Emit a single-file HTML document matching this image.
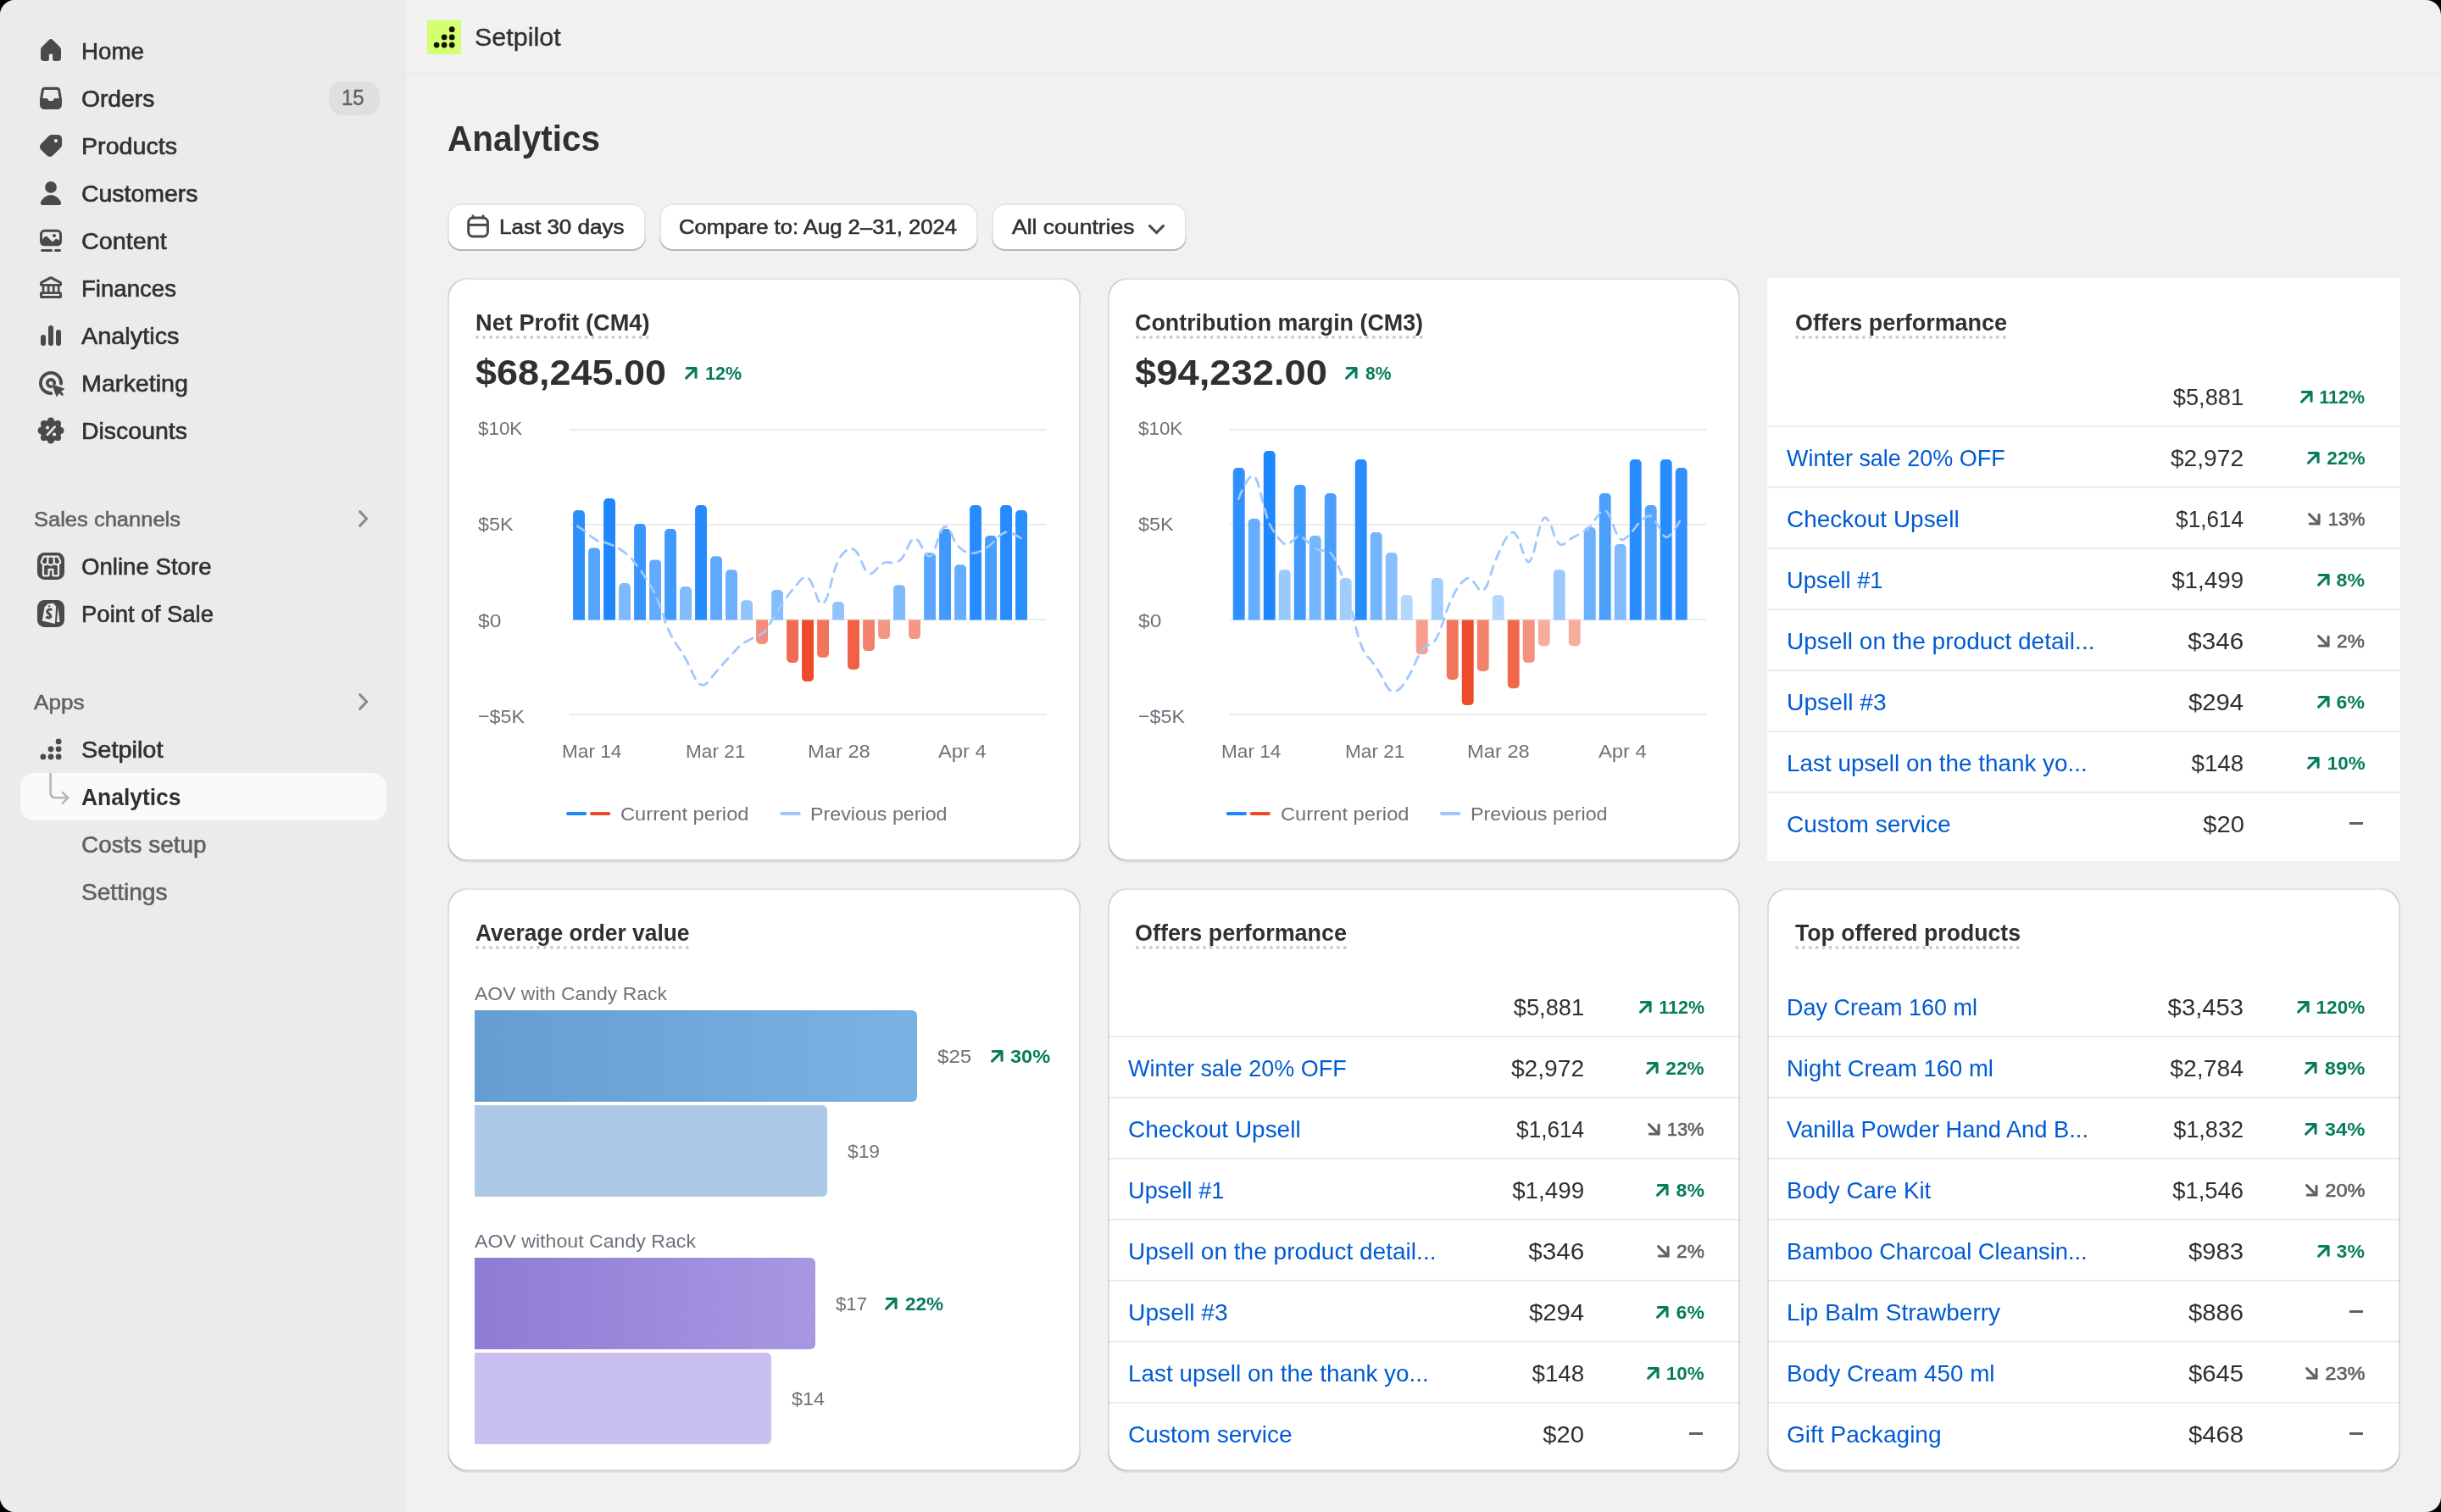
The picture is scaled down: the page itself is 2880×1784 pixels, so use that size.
<!DOCTYPE html>
<html><head><meta charset="utf-8"><title>Setpilot Analytics</title>
<style>
html,body{margin:0;padding:0;background:#000;}
body{width:2880px;height:1784px;overflow:hidden;font-family:"Liberation Sans",sans-serif;}
#app{position:absolute;left:0;top:0;width:2880px;height:1784px;background:#f1f1f1;border-radius:18px;overflow:hidden;will-change:transform;}
#side{position:absolute;left:0;top:0;width:480px;height:1784px;background:#ebebeb;}
#topline{position:absolute;left:480px;top:86px;width:2400px;height:2px;background:#ebebeb;}
.t{position:absolute;white-space:nowrap;line-height:1;}
.abs{position:absolute;}
.card{position:absolute;background:#fff;border-radius:24px;box-shadow:0 2px 0 0 rgba(26,26,26,.07);}
.bev{position:absolute;border-radius:24px;box-shadow:inset 2px 0 0 0 rgba(0,0,0,.13),inset -2px 0 0 0 rgba(0,0,0,.13),inset 0 -2px 0 0 rgba(0,0,0,.17),inset 0 2px 0 0 rgba(204,204,204,.5);}
.btn{position:absolute;background:#fff;border-radius:16px;height:56px;top:240px;box-shadow:inset 0 -2px 0 0 #b5b5b5,inset 0 0 0 2px rgba(0,0,0,.1),inset 0 1px 0 3px #fff;}
.dot{position:absolute;height:0;border-bottom:4px dotted #cccccc;}
.hr{position:absolute;height:2px;background:#ebebeb;}
svg{position:absolute;overflow:visible;}
</style></head><body><div id="app">
<div id="side"></div><div id="topline"></div>
<span class="t" id="t0" style="font-size:26.75px;top:48.00px;color:#303030;-webkit-text-stroke:0.6px #303030;left:96.00px;transform:scaleX(1.0370);transform-origin:0 0;">Home</span>
<span class="t" id="t1" style="font-size:26.75px;top:104.00px;color:#303030;-webkit-text-stroke:0.6px #303030;left:96.00px;transform:scaleX(1.0555);transform-origin:0 0;">Orders</span>
<span class="t" id="t2" style="font-size:26.75px;top:160.00px;color:#303030;-webkit-text-stroke:0.6px #303030;left:96.00px;transform:scaleX(1.0703);transform-origin:0 0;">Products</span>
<span class="t" id="t3" style="font-size:26.75px;top:216.00px;color:#303030;-webkit-text-stroke:0.6px #303030;left:96.00px;transform:scaleX(1.0632);transform-origin:0 0;">Customers</span>
<span class="t" id="t4" style="font-size:26.75px;top:272.00px;color:#303030;-webkit-text-stroke:0.6px #303030;left:96.00px;transform:scaleX(1.0747);transform-origin:0 0;">Content</span>
<span class="t" id="t5" style="font-size:26.75px;top:328.00px;color:#303030;-webkit-text-stroke:0.6px #303030;left:96.00px;transform:scaleX(1.0318);transform-origin:0 0;">Finances</span>
<span class="t" id="t6" style="font-size:26.75px;top:384.00px;color:#303030;-webkit-text-stroke:0.6px #303030;left:96.00px;transform:scaleX(1.0790);transform-origin:0 0;">Analytics</span>
<span class="t" id="t7" style="font-size:26.75px;top:440.00px;color:#303030;-webkit-text-stroke:0.6px #303030;left:96.00px;transform:scaleX(1.0719);transform-origin:0 0;">Marketing</span>
<span class="t" id="t8" style="font-size:26.75px;top:496.00px;color:#303030;-webkit-text-stroke:0.6px #303030;left:96.00px;transform:scaleX(1.0634);transform-origin:0 0;">Discounts</span>
<div class="abs" style="left:388px;top:96px;width:60px;height:40px;border-radius:16px;background:#dfdfdf"></div>
<span class="t" id="t9" style="font-size:25.25px;top:103.00px;color:#616161;-webkit-text-stroke:0.4px #616161;left:403.20px;transform:scaleX(0.9468);transform-origin:0 0;">15</span>
<span class="t" id="t10" style="font-size:24.75px;top:601.00px;color:#616161;-webkit-text-stroke:0.55px #616161;left:40.00px;transform:scaleX(1.0305);transform-origin:0 0;">Sales channels</span>
<span class="t" id="t11" style="font-size:26.75px;top:656.00px;color:#303030;-webkit-text-stroke:0.6px #303030;left:96.00px;transform:scaleX(1.0323);transform-origin:0 0;">Online Store</span>
<span class="t" id="t12" style="font-size:26.75px;top:712.00px;color:#303030;-webkit-text-stroke:0.6px #303030;left:96.00px;transform:scaleX(1.0284);transform-origin:0 0;">Point of Sale</span>
<span class="t" id="t13" style="font-size:24.75px;top:817.00px;color:#616161;-webkit-text-stroke:0.55px #616161;left:40.00px;transform:scaleX(1.0546);transform-origin:0 0;">Apps</span>
<span class="t" id="t14" style="font-size:26.75px;top:872.00px;color:#303030;-webkit-text-stroke:0.6px #303030;left:96.00px;transform:scaleX(1.0814);transform-origin:0 0;">Setpilot</span>
<div class="abs" style="left:24px;top:912px;width:432px;height:56px;border-radius:16px;background:#fafafa"></div>
<span class="t" id="t15" style="font-size:26.75px;top:928.00px;color:#303030;font-weight:700;left:96.00px;transform:scaleX(0.9878);transform-origin:0 0;">Analytics</span>
<span class="t" id="t16" style="font-size:26.75px;top:984.00px;color:#616161;-webkit-text-stroke:0.55px #616161;left:96.00px;transform:scaleX(1.0442);transform-origin:0 0;">Costs setup</span>
<span class="t" id="t17" style="font-size:26.75px;top:1040.00px;color:#616161;-webkit-text-stroke:0.55px #616161;left:96.00px;transform:scaleX(1.0501);transform-origin:0 0;">Settings</span>
<div class="abs" style="left:504px;top:24px;width:40px;height:40px;background:#d4ff70"></div>
<span class="t" id="t18" style="font-size:30.25px;top:29.00px;color:#303030;-webkit-text-stroke:0.35px #303030;left:560.00px;transform:scaleX(1.0089);transform-origin:0 0;">Setpilot</span>
<span class="t" id="t19" style="font-size:42.00px;top:143.00px;color:#303030;font-weight:700;left:528.00px;transform:scaleX(0.9639);transform-origin:0 0;">Analytics</span>
<div class="btn" style="left:528px;width:234px"></div>
<div class="btn" style="left:778px;width:376px"></div>
<div class="btn" style="left:1170px;width:230px"></div>
<span class="t" id="t20" style="font-size:24.75px;top:256.00px;color:#303030;-webkit-text-stroke:0.6px #303030;left:588.50px;transform:scaleX(1.0510);transform-origin:0 0;">Last 30 days</span>
<span class="t" id="t21" style="font-size:24.75px;top:256.00px;color:#303030;-webkit-text-stroke:0.6px #303030;left:801.00px;transform:scaleX(1.0364);transform-origin:0 0;">Compare to: Aug 2–31, 2024</span>
<span class="t" id="t22" style="font-size:24.75px;top:256.00px;color:#303030;-webkit-text-stroke:0.6px #303030;left:1194.00px;transform:scaleX(1.0719);transform-origin:0 0;">All countries</span>
<div class="card" style="left:528.00px;top:328px;width:746.67px;height:688px"></div>
<div class="card" style="left:1306.67px;top:328px;width:746.67px;height:688px"></div>
<div class="abs" style="left:2085.34px;top:328px;width:746.67px;height:688px;background:#fff"></div>
<div class="card" style="left:528.00px;top:1048px;width:746.67px;height:688px"></div>
<div class="card" style="left:1306.67px;top:1048px;width:746.67px;height:688px"></div>
<div class="card" style="left:2085.34px;top:1048px;width:746.67px;height:688px"></div>
<span class="t" id="t23" style="font-size:26.75px;top:368.00px;color:#303030;font-weight:700;left:560.50px;transform:scaleX(1.0168);transform-origin:0 0;">Net Profit (CM4)</span>
<div class="dot" style="left:561.00px;top:396px;width:204.5px"></div>
<span class="t" id="t24" style="font-size:26.75px;top:368.00px;color:#303030;font-weight:700;left:1339.17px;transform:scaleX(1.0036);transform-origin:0 0;">Contribution margin (CM3)</span>
<div class="dot" style="left:1339.67px;top:396px;width:339.0px"></div>
<span class="t" id="t25" style="font-size:26.75px;top:368.00px;color:#303030;font-weight:700;left:2117.84px;transform:scaleX(1.0070);transform-origin:0 0;">Offers performance</span>
<div class="dot" style="left:2118.34px;top:396px;width:249.0px"></div>
<span class="t" id="t26" style="font-size:26.75px;top:1088.00px;color:#303030;font-weight:700;left:560.50px;transform:scaleX(0.9854);transform-origin:0 0;">Average order value</span>
<div class="dot" style="left:561.00px;top:1116px;width:251.5px"></div>
<span class="t" id="t27" style="font-size:26.75px;top:1088.00px;color:#303030;font-weight:700;left:1339.17px;transform:scaleX(1.0070);transform-origin:0 0;">Offers performance</span>
<div class="dot" style="left:1339.67px;top:1116px;width:249.0px"></div>
<span class="t" id="t28" style="font-size:26.75px;top:1088.00px;color:#303030;font-weight:700;left:2117.84px;transform:scaleX(0.9963);transform-origin:0 0;">Top offered products</span>
<div class="dot" style="left:2118.34px;top:1116px;width:265.0px"></div>
<span class="t" id="t29" style="font-size:42.25px;top:419.00px;color:#303030;font-weight:700;left:560.50px;transform:scaleX(1.0640);transform-origin:0 0;">$68,245.00</span>
<span class="t" id="t30" style="font-size:22.75px;top:429.00px;color:#077c5d;font-weight:700;left:832.00px;transform:scaleX(0.9441);transform-origin:0 0;">12%</span>
<svg style="left:808.30px;top:432.60px" width="14.6" height="14.6" viewBox="0 0 14.6 14.6"><path d="M2.3 1.55H13.05V12.3M13.05 1.55L1.55 13.05" fill="none" stroke="#077c5d" stroke-width="3.1" stroke-linecap="round" stroke-linejoin="round"/></svg>
<span class="t" id="t31" style="font-size:42.25px;top:419.00px;color:#303030;font-weight:700;left:1339.17px;transform:scaleX(1.0734);transform-origin:0 0;">$94,232.00</span>
<span class="t" id="t32" style="font-size:22.75px;top:429.00px;color:#077c5d;font-weight:700;left:1611.00px;transform:scaleX(0.9273);transform-origin:0 0;">8%</span>
<svg style="left:1587.00px;top:432.60px" width="14.6" height="14.6" viewBox="0 0 14.6 14.6"><path d="M2.3 1.55H13.05V12.3M13.05 1.55L1.55 13.05" fill="none" stroke="#077c5d" stroke-width="3.1" stroke-linecap="round" stroke-linejoin="round"/></svg>
<span class="t" id="t33" style="font-size:27.50px;top:455.00px;color:#303030;right:232.46px;transform:scaleX(0.9902);transform-origin:100% 0;">$5,881</span>
<span class="t" id="t34" style="font-size:22.75px;top:457.00px;color:#077c5d;font-weight:700;right:89.76px;transform:scaleX(0.9414);transform-origin:100% 0;">112%</span>
<svg style="left:2713.54px;top:460.60px" width="14.6" height="14.6" viewBox="0 0 14.6 14.6"><path d="M2.3 1.55H13.05V12.3M13.05 1.55L1.55 13.05" fill="none" stroke="#077c5d" stroke-width="3.1" stroke-linecap="round" stroke-linejoin="round"/></svg>
<div class="hr" style="left:2085.34px;top:502px;width:746.67px"></div>
<span class="t" id="t35" style="font-size:26.75px;top:528.00px;color:#005bd3;left:2108.14px;transform:scaleX(1.0079);transform-origin:0 0;">Winter sale 20% OFF</span>
<span class="t" id="t36" style="font-size:27.50px;top:527.00px;color:#303030;right:232.46px;transform:scaleX(1.0247);transform-origin:100% 0;">$2,972</span>
<span class="t" id="t37" style="font-size:22.75px;top:529.00px;color:#077c5d;font-weight:700;right:89.76px;transform:scaleX(0.9924);transform-origin:100% 0;">22%</span>
<svg style="left:2721.94px;top:532.60px" width="14.6" height="14.6" viewBox="0 0 14.6 14.6"><path d="M2.3 1.55H13.05V12.3M13.05 1.55L1.55 13.05" fill="none" stroke="#077c5d" stroke-width="3.1" stroke-linecap="round" stroke-linejoin="round"/></svg>
<div class="hr" style="left:2085.34px;top:574px;width:746.67px"></div>
<span class="t" id="t38" style="font-size:26.75px;top:600.00px;color:#005bd3;left:2108.14px;transform:scaleX(1.0453);transform-origin:0 0;">Checkout Upsell</span>
<span class="t" id="t39" style="font-size:27.50px;top:599.00px;color:#303030;right:232.46px;transform:scaleX(0.9510);transform-origin:100% 0;">$1,614</span>
<span class="t" id="t40" style="font-size:22.75px;top:601.00px;color:#616161;-webkit-text-stroke:0.6px #616161;right:89.76px;transform:scaleX(0.9595);transform-origin:100% 0;">13%</span>
<svg style="left:2723.44px;top:604.60px" width="14.6" height="14.6" viewBox="0 0 14.6 14.6"><path d="M13.05 2.3V13.05H2.3M13.05 13.05L1.55 1.55" fill="none" stroke="#616161" stroke-width="3.1" stroke-linecap="round" stroke-linejoin="round"/></svg>
<div class="hr" style="left:2085.34px;top:646px;width:746.67px"></div>
<span class="t" id="t41" style="font-size:26.75px;top:672.00px;color:#005bd3;left:2108.14px;transform:scaleX(1.0177);transform-origin:0 0;">Upsell #1</span>
<span class="t" id="t42" style="font-size:27.50px;top:671.00px;color:#303030;right:232.46px;transform:scaleX(1.0104);transform-origin:100% 0;">$1,499</span>
<span class="t" id="t43" style="font-size:22.75px;top:673.00px;color:#077c5d;font-weight:700;right:89.76px;transform:scaleX(1.0124);transform-origin:100% 0;">8%</span>
<svg style="left:2733.84px;top:676.60px" width="14.6" height="14.6" viewBox="0 0 14.6 14.6"><path d="M2.3 1.55H13.05V12.3M13.05 1.55L1.55 13.05" fill="none" stroke="#077c5d" stroke-width="3.1" stroke-linecap="round" stroke-linejoin="round"/></svg>
<div class="hr" style="left:2085.34px;top:718px;width:746.67px"></div>
<span class="t" id="t44" style="font-size:26.75px;top:744.00px;color:#005bd3;left:2108.14px;transform:scaleX(1.0491);transform-origin:0 0;">Upsell on the product detail...</span>
<span class="t" id="t45" style="font-size:27.50px;top:743.00px;color:#303030;right:232.46px;transform:scaleX(1.0787);transform-origin:100% 0;">$346</span>
<span class="t" id="t46" style="font-size:22.75px;top:745.00px;color:#616161;-webkit-text-stroke:0.6px #616161;right:89.76px;transform:scaleX(0.9972);transform-origin:100% 0;">2%</span>
<svg style="left:2734.34px;top:748.60px" width="14.6" height="14.6" viewBox="0 0 14.6 14.6"><path d="M13.05 2.3V13.05H2.3M13.05 13.05L1.55 1.55" fill="none" stroke="#616161" stroke-width="3.1" stroke-linecap="round" stroke-linejoin="round"/></svg>
<div class="hr" style="left:2085.34px;top:790px;width:746.67px"></div>
<span class="t" id="t47" style="font-size:26.75px;top:816.00px;color:#005bd3;left:2108.14px;transform:scaleX(1.0553);transform-origin:0 0;">Upsell #3</span>
<span class="t" id="t48" style="font-size:27.50px;top:815.00px;color:#303030;right:232.46px;transform:scaleX(1.0672);transform-origin:100% 0;">$294</span>
<span class="t" id="t49" style="font-size:22.75px;top:817.00px;color:#077c5d;font-weight:700;right:89.76px;transform:scaleX(1.0124);transform-origin:100% 0;">6%</span>
<svg style="left:2733.84px;top:820.60px" width="14.6" height="14.6" viewBox="0 0 14.6 14.6"><path d="M2.3 1.55H13.05V12.3M13.05 1.55L1.55 13.05" fill="none" stroke="#077c5d" stroke-width="3.1" stroke-linecap="round" stroke-linejoin="round"/></svg>
<div class="hr" style="left:2085.34px;top:862px;width:746.67px"></div>
<span class="t" id="t50" style="font-size:26.75px;top:888.00px;color:#005bd3;left:2108.14px;transform:scaleX(1.0416);transform-origin:0 0;">Last upsell on the thank yo...</span>
<span class="t" id="t51" style="font-size:27.50px;top:887.00px;color:#303030;right:232.46px;transform:scaleX(1.0084);transform-origin:100% 0;">$148</span>
<span class="t" id="t52" style="font-size:22.75px;top:889.00px;color:#077c5d;font-weight:700;right:89.76px;transform:scaleX(0.9836);transform-origin:100% 0;">10%</span>
<svg style="left:2722.34px;top:892.60px" width="14.6" height="14.6" viewBox="0 0 14.6 14.6"><path d="M2.3 1.55H13.05V12.3M13.05 1.55L1.55 13.05" fill="none" stroke="#077c5d" stroke-width="3.1" stroke-linecap="round" stroke-linejoin="round"/></svg>
<div class="hr" style="left:2085.34px;top:934px;width:746.67px"></div>
<span class="t" id="t53" style="font-size:26.75px;top:960.00px;color:#005bd3;left:2108.14px;transform:scaleX(1.0508);transform-origin:0 0;">Custom service</span>
<span class="t" id="t54" style="font-size:27.50px;top:959.00px;color:#303030;right:232.46px;transform:scaleX(1.0612);transform-origin:100% 0;">$20</span>
<div class="abs" style="left:2771.94px;top:970.30px;width:16.3px;height:3px;background:#616161"></div>
<span class="t" id="t55" style="font-size:27.50px;top:1175.00px;color:#303030;right:1011.13px;transform:scaleX(0.9902);transform-origin:100% 0;">$5,881</span>
<span class="t" id="t56" style="font-size:22.75px;top:1177.00px;color:#077c5d;font-weight:700;right:869.23px;transform:scaleX(0.9414);transform-origin:100% 0;">112%</span>
<svg style="left:1934.07px;top:1180.60px" width="14.6" height="14.6" viewBox="0 0 14.6 14.6"><path d="M2.3 1.55H13.05V12.3M13.05 1.55L1.55 13.05" fill="none" stroke="#077c5d" stroke-width="3.1" stroke-linecap="round" stroke-linejoin="round"/></svg>
<div class="hr" style="left:1306.67px;top:1222px;width:746.67px"></div>
<span class="t" id="t57" style="font-size:26.75px;top:1248.00px;color:#005bd3;left:1331.47px;transform:scaleX(1.0079);transform-origin:0 0;">Winter sale 20% OFF</span>
<span class="t" id="t58" style="font-size:27.50px;top:1247.00px;color:#303030;right:1011.13px;transform:scaleX(1.0247);transform-origin:100% 0;">$2,972</span>
<span class="t" id="t59" style="font-size:22.75px;top:1249.00px;color:#077c5d;font-weight:700;right:869.23px;transform:scaleX(0.9924);transform-origin:100% 0;">22%</span>
<svg style="left:1942.47px;top:1252.60px" width="14.6" height="14.6" viewBox="0 0 14.6 14.6"><path d="M2.3 1.55H13.05V12.3M13.05 1.55L1.55 13.05" fill="none" stroke="#077c5d" stroke-width="3.1" stroke-linecap="round" stroke-linejoin="round"/></svg>
<div class="hr" style="left:1306.67px;top:1294px;width:746.67px"></div>
<span class="t" id="t60" style="font-size:26.75px;top:1320.00px;color:#005bd3;left:1331.47px;transform:scaleX(1.0453);transform-origin:0 0;">Checkout Upsell</span>
<span class="t" id="t61" style="font-size:27.50px;top:1319.00px;color:#303030;right:1011.13px;transform:scaleX(0.9510);transform-origin:100% 0;">$1,614</span>
<span class="t" id="t62" style="font-size:22.75px;top:1321.00px;color:#616161;-webkit-text-stroke:0.6px #616161;right:869.23px;transform:scaleX(0.9595);transform-origin:100% 0;">13%</span>
<svg style="left:1943.97px;top:1324.60px" width="14.6" height="14.6" viewBox="0 0 14.6 14.6"><path d="M13.05 2.3V13.05H2.3M13.05 13.05L1.55 1.55" fill="none" stroke="#616161" stroke-width="3.1" stroke-linecap="round" stroke-linejoin="round"/></svg>
<div class="hr" style="left:1306.67px;top:1366px;width:746.67px"></div>
<span class="t" id="t63" style="font-size:26.75px;top:1392.00px;color:#005bd3;left:1331.47px;transform:scaleX(1.0177);transform-origin:0 0;">Upsell #1</span>
<span class="t" id="t64" style="font-size:27.50px;top:1391.00px;color:#303030;right:1011.13px;transform:scaleX(1.0104);transform-origin:100% 0;">$1,499</span>
<span class="t" id="t65" style="font-size:22.75px;top:1393.00px;color:#077c5d;font-weight:700;right:869.23px;transform:scaleX(1.0124);transform-origin:100% 0;">8%</span>
<svg style="left:1954.37px;top:1396.60px" width="14.6" height="14.6" viewBox="0 0 14.6 14.6"><path d="M2.3 1.55H13.05V12.3M13.05 1.55L1.55 13.05" fill="none" stroke="#077c5d" stroke-width="3.1" stroke-linecap="round" stroke-linejoin="round"/></svg>
<div class="hr" style="left:1306.67px;top:1438px;width:746.67px"></div>
<span class="t" id="t66" style="font-size:26.75px;top:1464.00px;color:#005bd3;left:1331.47px;transform:scaleX(1.0491);transform-origin:0 0;">Upsell on the product detail...</span>
<span class="t" id="t67" style="font-size:27.50px;top:1463.00px;color:#303030;right:1011.13px;transform:scaleX(1.0787);transform-origin:100% 0;">$346</span>
<span class="t" id="t68" style="font-size:22.75px;top:1465.00px;color:#616161;-webkit-text-stroke:0.6px #616161;right:869.23px;transform:scaleX(0.9972);transform-origin:100% 0;">2%</span>
<svg style="left:1954.87px;top:1468.60px" width="14.6" height="14.6" viewBox="0 0 14.6 14.6"><path d="M13.05 2.3V13.05H2.3M13.05 13.05L1.55 1.55" fill="none" stroke="#616161" stroke-width="3.1" stroke-linecap="round" stroke-linejoin="round"/></svg>
<div class="hr" style="left:1306.67px;top:1510px;width:746.67px"></div>
<span class="t" id="t69" style="font-size:26.75px;top:1536.00px;color:#005bd3;left:1331.47px;transform:scaleX(1.0553);transform-origin:0 0;">Upsell #3</span>
<span class="t" id="t70" style="font-size:27.50px;top:1535.00px;color:#303030;right:1011.13px;transform:scaleX(1.0672);transform-origin:100% 0;">$294</span>
<span class="t" id="t71" style="font-size:22.75px;top:1537.00px;color:#077c5d;font-weight:700;right:869.23px;transform:scaleX(1.0124);transform-origin:100% 0;">6%</span>
<svg style="left:1954.37px;top:1540.60px" width="14.6" height="14.6" viewBox="0 0 14.6 14.6"><path d="M2.3 1.55H13.05V12.3M13.05 1.55L1.55 13.05" fill="none" stroke="#077c5d" stroke-width="3.1" stroke-linecap="round" stroke-linejoin="round"/></svg>
<div class="hr" style="left:1306.67px;top:1582px;width:746.67px"></div>
<span class="t" id="t72" style="font-size:26.75px;top:1608.00px;color:#005bd3;left:1331.47px;transform:scaleX(1.0416);transform-origin:0 0;">Last upsell on the thank yo...</span>
<span class="t" id="t73" style="font-size:27.50px;top:1607.00px;color:#303030;right:1011.13px;transform:scaleX(1.0084);transform-origin:100% 0;">$148</span>
<span class="t" id="t74" style="font-size:22.75px;top:1609.00px;color:#077c5d;font-weight:700;right:869.23px;transform:scaleX(0.9836);transform-origin:100% 0;">10%</span>
<svg style="left:1942.87px;top:1612.60px" width="14.6" height="14.6" viewBox="0 0 14.6 14.6"><path d="M2.3 1.55H13.05V12.3M13.05 1.55L1.55 13.05" fill="none" stroke="#077c5d" stroke-width="3.1" stroke-linecap="round" stroke-linejoin="round"/></svg>
<div class="hr" style="left:1306.67px;top:1654px;width:746.67px"></div>
<span class="t" id="t75" style="font-size:26.75px;top:1680.00px;color:#005bd3;left:1331.47px;transform:scaleX(1.0508);transform-origin:0 0;">Custom service</span>
<span class="t" id="t76" style="font-size:27.50px;top:1679.00px;color:#303030;right:1011.13px;transform:scaleX(1.0612);transform-origin:100% 0;">$20</span>
<div class="abs" style="left:1992.95px;top:1690.30px;width:16.3px;height:3px;background:#616161"></div>
<span class="t" id="t77" style="font-size:26.75px;top:1176.00px;color:#005bd3;left:2108.14px;transform:scaleX(1.0085);transform-origin:0 0;">Day Cream 160 ml</span>
<span class="t" id="t78" style="font-size:27.50px;top:1175.00px;color:#303030;right:232.46px;transform:scaleX(1.0639);transform-origin:100% 0;">$3,453</span>
<span class="t" id="t79" style="font-size:22.75px;top:1177.00px;color:#077c5d;font-weight:700;right:89.76px;transform:scaleX(0.9899);transform-origin:100% 0;">120%</span>
<svg style="left:2709.54px;top:1180.60px" width="14.6" height="14.6" viewBox="0 0 14.6 14.6"><path d="M2.3 1.55H13.05V12.3M13.05 1.55L1.55 13.05" fill="none" stroke="#077c5d" stroke-width="3.1" stroke-linecap="round" stroke-linejoin="round"/></svg>
<div class="hr" style="left:2085.34px;top:1222px;width:746.67px"></div>
<span class="t" id="t80" style="font-size:26.75px;top:1248.00px;color:#005bd3;left:2108.14px;transform:scaleX(1.0253);transform-origin:0 0;">Night Cream 160 ml</span>
<span class="t" id="t81" style="font-size:27.50px;top:1247.00px;color:#303030;right:232.46px;transform:scaleX(1.0330);transform-origin:100% 0;">$2,784</span>
<span class="t" id="t82" style="font-size:22.75px;top:1249.00px;color:#077c5d;font-weight:700;right:89.76px;transform:scaleX(1.0473);transform-origin:100% 0;">89%</span>
<svg style="left:2719.44px;top:1252.60px" width="14.6" height="14.6" viewBox="0 0 14.6 14.6"><path d="M2.3 1.55H13.05V12.3M13.05 1.55L1.55 13.05" fill="none" stroke="#077c5d" stroke-width="3.1" stroke-linecap="round" stroke-linejoin="round"/></svg>
<div class="hr" style="left:2085.34px;top:1294px;width:746.67px"></div>
<span class="t" id="t83" style="font-size:26.75px;top:1320.00px;color:#005bd3;left:2108.14px;transform:scaleX(1.0202);transform-origin:0 0;">Vanilla Powder Hand And B...</span>
<span class="t" id="t84" style="font-size:27.50px;top:1319.00px;color:#303030;right:232.46px;transform:scaleX(0.9866);transform-origin:100% 0;">$1,832</span>
<span class="t" id="t85" style="font-size:22.75px;top:1321.00px;color:#077c5d;font-weight:700;right:89.76px;transform:scaleX(1.0473);transform-origin:100% 0;">34%</span>
<svg style="left:2719.44px;top:1324.60px" width="14.6" height="14.6" viewBox="0 0 14.6 14.6"><path d="M2.3 1.55H13.05V12.3M13.05 1.55L1.55 13.05" fill="none" stroke="#077c5d" stroke-width="3.1" stroke-linecap="round" stroke-linejoin="round"/></svg>
<div class="hr" style="left:2085.34px;top:1366px;width:746.67px"></div>
<span class="t" id="t86" style="font-size:26.75px;top:1392.00px;color:#005bd3;left:2108.14px;transform:scaleX(1.0312);transform-origin:0 0;">Body Care Kit</span>
<span class="t" id="t87" style="font-size:27.50px;top:1391.00px;color:#303030;right:232.46px;transform:scaleX(0.9985);transform-origin:100% 0;">$1,546</span>
<span class="t" id="t88" style="font-size:22.75px;top:1393.00px;color:#616161;-webkit-text-stroke:0.6px #616161;right:89.76px;transform:scaleX(1.0385);transform-origin:100% 0;">20%</span>
<svg style="left:2719.84px;top:1396.60px" width="14.6" height="14.6" viewBox="0 0 14.6 14.6"><path d="M13.05 2.3V13.05H2.3M13.05 13.05L1.55 1.55" fill="none" stroke="#616161" stroke-width="3.1" stroke-linecap="round" stroke-linejoin="round"/></svg>
<div class="hr" style="left:2085.34px;top:1438px;width:746.67px"></div>
<span class="t" id="t89" style="font-size:26.75px;top:1464.00px;color:#005bd3;left:2108.14px;transform:scaleX(1.0194);transform-origin:0 0;">Bamboo Charcoal Cleansin...</span>
<span class="t" id="t90" style="font-size:27.50px;top:1463.00px;color:#303030;right:232.46px;transform:scaleX(1.0672);transform-origin:100% 0;">$983</span>
<span class="t" id="t91" style="font-size:22.75px;top:1465.00px;color:#077c5d;font-weight:700;right:89.76px;transform:scaleX(1.0124);transform-origin:100% 0;">3%</span>
<svg style="left:2733.84px;top:1468.60px" width="14.6" height="14.6" viewBox="0 0 14.6 14.6"><path d="M2.3 1.55H13.05V12.3M13.05 1.55L1.55 13.05" fill="none" stroke="#077c5d" stroke-width="3.1" stroke-linecap="round" stroke-linejoin="round"/></svg>
<div class="hr" style="left:2085.34px;top:1510px;width:746.67px"></div>
<span class="t" id="t92" style="font-size:26.75px;top:1536.00px;color:#005bd3;left:2108.14px;transform:scaleX(1.0467);transform-origin:0 0;">Lip Balm Strawberry</span>
<span class="t" id="t93" style="font-size:27.50px;top:1535.00px;color:#303030;right:232.46px;transform:scaleX(1.0672);transform-origin:100% 0;">$886</span>
<div class="abs" style="left:2771.94px;top:1546.30px;width:16.3px;height:3px;background:#616161"></div>
<div class="hr" style="left:2085.34px;top:1582px;width:746.67px"></div>
<span class="t" id="t94" style="font-size:26.75px;top:1608.00px;color:#005bd3;left:2108.14px;transform:scaleX(1.0385);transform-origin:0 0;">Body Cream 450 ml</span>
<span class="t" id="t95" style="font-size:27.50px;top:1607.00px;color:#303030;right:232.46px;transform:scaleX(1.0672);transform-origin:100% 0;">$645</span>
<span class="t" id="t96" style="font-size:22.75px;top:1609.00px;color:#616161;-webkit-text-stroke:0.6px #616161;right:89.76px;transform:scaleX(1.0385);transform-origin:100% 0;">23%</span>
<svg style="left:2719.84px;top:1612.60px" width="14.6" height="14.6" viewBox="0 0 14.6 14.6"><path d="M13.05 2.3V13.05H2.3M13.05 13.05L1.55 1.55" fill="none" stroke="#616161" stroke-width="3.1" stroke-linecap="round" stroke-linejoin="round"/></svg>
<div class="hr" style="left:2085.34px;top:1654px;width:746.67px"></div>
<span class="t" id="t97" style="font-size:26.75px;top:1680.00px;color:#005bd3;left:2108.14px;transform:scaleX(1.0496);transform-origin:0 0;">Gift Packaging</span>
<span class="t" id="t98" style="font-size:27.50px;top:1679.00px;color:#303030;right:232.46px;transform:scaleX(1.0672);transform-origin:100% 0;">$468</span>
<div class="abs" style="left:2771.94px;top:1690.30px;width:16.3px;height:3px;background:#616161"></div>
<svg style="left:0;top:0" width="2880" height="1784" viewBox="0 0 2880 1784"><rect x="672.00" y="506" width="562.5" height="2" fill="#ececec"/><rect x="672.00" y="618" width="562.5" height="2" fill="#ececec"/><rect x="672.00" y="730" width="562.5" height="2" fill="#ececec"/><rect x="672.00" y="842" width="562.5" height="2" fill="#ececec"/><path d="M676.10 731.6V606.70a4.7 4.7 0 0 1 4.7-4.7h4.5a4.7 4.7 0 0 1 4.7 4.7V731.6z" fill="#2b8efd"/><path d="M694.10 731.6V651.10a4.7 4.7 0 0 1 4.7-4.7h4.5a4.7 4.7 0 0 1 4.7 4.7V731.6z" fill="#55a4fd"/><path d="M712.10 731.6V592.70a4.7 4.7 0 0 1 4.7-4.7h4.5a4.7 4.7 0 0 1 4.7 4.7V731.6z" fill="#1e87fd"/><path d="M730.10 731.6V692.70a4.7 4.7 0 0 1 4.7-4.7h4.5a4.7 4.7 0 0 1 4.7 4.7V731.6z" fill="#7cb9fe"/><path d="M748.10 731.6V622.80a4.7 4.7 0 0 1 4.7-4.7h4.5a4.7 4.7 0 0 1 4.7 4.7V731.6z" fill="#3a96fd"/><path d="M766.10 731.6V665.10a4.7 4.7 0 0 1 4.7-4.7h4.5a4.7 4.7 0 0 1 4.7 4.7V731.6z" fill="#62abfe"/><path d="M784.10 731.6V628.70a4.7 4.7 0 0 1 4.7-4.7h4.5a4.7 4.7 0 0 1 4.7 4.7V731.6z" fill="#4099fd"/><path d="M802.10 731.6V696.70a4.7 4.7 0 0 1 4.7-4.7h4.5a4.7 4.7 0 0 1 4.7 4.7V731.6z" fill="#80bbfe"/><path d="M820.10 731.6V600.70a4.7 4.7 0 0 1 4.7-4.7h4.5a4.7 4.7 0 0 1 4.7 4.7V731.6z" fill="#268bfd"/><path d="M838.10 731.6V661.00a4.7 4.7 0 0 1 4.7-4.7h4.5a4.7 4.7 0 0 1 4.7 4.7V731.6z" fill="#5ea9fe"/><path d="M856.10 731.6V676.90a4.7 4.7 0 0 1 4.7-4.7h4.5a4.7 4.7 0 0 1 4.7 4.7V731.6z" fill="#6db1fe"/><path d="M874.10 731.6V712.90a4.7 4.7 0 0 1 4.7-4.7h4.5a4.7 4.7 0 0 1 4.7 4.7V731.6z" fill="#8fc4fe"/><path d="M892.10 731.6V755.30a4.7 4.7 0 0 0 4.7 4.7h4.5a4.7 4.7 0 0 0 4.7-4.7V731.6z" fill="#f48c79"/><path d="M910.10 731.6V700.70a4.7 4.7 0 0 1 4.7-4.7h4.5a4.7 4.7 0 0 1 4.7 4.7V731.6z" fill="#84bdfe"/><path d="M928.10 731.6V777.30a4.7 4.7 0 0 0 4.7 4.7h4.5a4.7 4.7 0 0 0 4.7-4.7V731.6z" fill="#f16c52"/><path d="M946.10 731.6V799.40a4.7 4.7 0 0 0 4.7 4.7h4.5a4.7 4.7 0 0 0 4.7-4.7V731.6z" fill="#ee4b2c"/><path d="M964.10 731.6V771.10a4.7 4.7 0 0 0 4.7 4.7h4.5a4.7 4.7 0 0 0 4.7-4.7V731.6z" fill="#f2755d"/><path d="M982.10 731.6V714.70a4.7 4.7 0 0 1 4.7-4.7h4.5a4.7 4.7 0 0 1 4.7 4.7V731.6z" fill="#91c4fe"/><path d="M1000.10 731.6V785.40a4.7 4.7 0 0 0 4.7 4.7h4.5a4.7 4.7 0 0 0 4.7-4.7V731.6z" fill="#f06044"/><path d="M1018.10 731.6V763.40a4.7 4.7 0 0 0 4.7 4.7h4.5a4.7 4.7 0 0 0 4.7-4.7V731.6z" fill="#f3806b"/><path d="M1036.10 731.6V749.40a4.7 4.7 0 0 0 4.7 4.7h4.5a4.7 4.7 0 0 0 4.7-4.7V731.6z" fill="#f59583"/><path d="M1054.10 731.6V694.90a4.7 4.7 0 0 1 4.7-4.7h4.5a4.7 4.7 0 0 1 4.7 4.7V731.6z" fill="#7ebafe"/><path d="M1072.10 731.6V749.40a4.7 4.7 0 0 0 4.7 4.7h4.5a4.7 4.7 0 0 0 4.7-4.7V731.6z" fill="#f59583"/><path d="M1090.10 731.6V657.00a4.7 4.7 0 0 1 4.7-4.7h4.5a4.7 4.7 0 0 1 4.7 4.7V731.6z" fill="#5ba7fe"/><path d="M1108.10 731.6V628.70a4.7 4.7 0 0 1 4.7-4.7h4.5a4.7 4.7 0 0 1 4.7 4.7V731.6z" fill="#4099fd"/><path d="M1126.10 731.6V671.00a4.7 4.7 0 0 1 4.7-4.7h4.5a4.7 4.7 0 0 1 4.7 4.7V731.6z" fill="#68aefe"/><path d="M1144.10 731.6V600.70a4.7 4.7 0 0 1 4.7-4.7h4.5a4.7 4.7 0 0 1 4.7 4.7V731.6z" fill="#268bfd"/><path d="M1162.10 731.6V636.80a4.7 4.7 0 0 1 4.7-4.7h4.5a4.7 4.7 0 0 1 4.7 4.7V731.6z" fill="#489dfd"/><path d="M1180.10 731.6V600.70a4.7 4.7 0 0 1 4.7-4.7h4.5a4.7 4.7 0 0 1 4.7 4.7V731.6z" fill="#268bfd"/><path d="M1198.10 731.6V606.70a4.7 4.7 0 0 1 4.7-4.7h4.5a4.7 4.7 0 0 1 4.7 4.7V731.6z" fill="#2b8efd"/><path d="M681.5 621.0C682.8 621.9 686.9 624.5 689.2 626.2C691.5 627.9 692.5 629.3 695.2 631.3C697.9 633.3 702.6 636.8 705.6 638.2C708.6 639.6 710.1 638.9 713.3 639.9C716.4 640.9 721.4 642.8 724.5 644.2C727.6 645.6 729.1 646.4 732.2 648.5C735.4 650.6 740.5 654.4 743.4 657.1C746.3 659.8 747.0 661.8 749.4 664.9C751.8 668.0 755.9 673.0 758.0 676.0C760.1 679.0 760.6 680.2 762.3 682.9C764.0 685.6 766.4 689.1 768.3 692.4C770.2 695.7 771.4 697.8 773.5 702.7C775.6 707.6 779.2 716.2 781.2 721.6C783.2 727.0 783.9 731.1 785.5 735.4C787.1 739.7 788.7 743.4 790.7 747.4C792.7 751.4 794.9 755.2 797.5 759.4C800.1 763.5 803.5 768.0 806.1 772.3C808.7 776.6 810.9 780.9 813.0 785.2C815.1 789.5 817.3 794.8 819.0 798.1C820.7 801.4 821.7 803.3 823.3 805.0C824.9 806.7 826.8 808.2 828.5 808.4C830.2 808.6 831.6 807.9 833.6 806.2C835.6 804.5 837.8 801.3 840.5 798.1C843.2 794.9 847.1 790.2 850.0 786.9C852.9 783.6 854.7 781.6 857.7 778.3C860.7 775.0 865.1 770.2 868.0 767.2C870.9 764.2 871.8 762.6 874.9 760.3C878.0 758.0 883.8 755.0 886.9 753.4C890.0 751.8 891.5 751.9 893.8 750.8C896.1 749.6 898.7 748.4 900.7 746.5C902.7 744.6 903.5 743.1 905.8 739.7C908.1 736.3 911.5 730.5 914.4 725.9C917.3 721.3 920.1 716.4 923.0 712.1C925.9 707.8 928.7 703.8 931.6 700.1C934.5 696.4 937.8 692.7 940.2 689.8C942.6 686.9 944.4 684.3 946.2 682.9C948.0 681.5 949.4 680.9 951.0 681.2C952.6 681.5 954.1 682.2 955.8 684.6C957.4 687.0 959.3 691.9 960.9 695.8C962.5 699.7 963.8 705.0 965.2 707.8C966.6 710.6 968.0 712.7 969.5 712.7C971.0 712.7 972.8 710.9 974.4 707.8C976.0 704.7 977.5 699.2 979.0 694.1C980.5 689.0 981.9 681.8 983.3 676.9C984.7 672.0 986.0 668.5 987.6 664.9C989.2 661.3 990.8 658.1 992.8 655.4C994.8 652.7 997.6 649.9 999.6 648.5C1001.6 647.1 1003.1 647.0 1004.8 647.3C1006.5 647.6 1008.2 648.2 1009.9 650.3C1011.6 652.4 1013.4 656.3 1015.1 659.7C1016.8 663.1 1018.4 668.0 1020.3 670.9C1022.2 673.8 1024.4 676.3 1026.3 676.9C1028.2 677.5 1029.4 675.9 1031.4 674.3C1033.4 672.7 1036.0 669.3 1038.3 667.5C1040.6 665.7 1042.3 664.1 1045.2 663.5C1048.1 662.9 1052.5 664.6 1055.5 664.0C1058.5 663.4 1061.0 661.9 1063.2 659.7C1065.4 657.6 1066.5 654.5 1068.4 651.1C1070.3 647.7 1072.5 641.7 1074.4 639.1C1076.3 636.5 1077.9 635.2 1079.6 635.3C1081.3 635.4 1082.8 637.3 1084.7 639.9C1086.6 642.5 1088.8 648.4 1090.7 651.1C1092.6 653.8 1094.2 656.0 1095.9 656.3C1097.6 656.6 1099.5 655.4 1101.1 652.8C1102.7 650.2 1103.8 645.2 1105.4 640.8C1107.0 636.4 1108.8 629.4 1110.5 626.2C1112.2 623.0 1114.0 621.5 1115.7 621.5C1117.4 621.5 1118.8 623.0 1120.8 626.2C1122.8 629.4 1125.1 636.9 1127.7 640.8C1130.3 644.7 1133.2 647.4 1136.3 649.4C1139.4 651.4 1143.2 652.6 1146.6 652.8C1150.0 652.9 1153.2 652.0 1156.9 650.3C1160.6 648.6 1165.3 645.5 1169.0 642.5C1172.7 639.5 1176.3 634.6 1179.3 632.2C1182.3 629.8 1184.4 628.3 1187.0 627.9C1189.6 627.5 1191.6 628.2 1194.8 629.6C1198.0 631.0 1204.1 634.9 1205.9 636.0" fill="none" stroke="#a0c8fd" stroke-width="2.8" stroke-dasharray="10.6 8.2" stroke-linecap="round"/><rect x="668.00" y="958" width="24.3" height="4" rx="2" fill="#1f87fd"/><rect x="696.00" y="958" width="24.3" height="4" rx="2" fill="#ee4b2c"/><rect x="920.40" y="958" width="24.3" height="4" rx="2" fill="#9cc6fc"/></svg>
<span class="t" id="t99" style="font-size:22.75px;top:494.00px;color:#70707b;left:564.30px;transform:scaleX(0.9842);transform-origin:0 0;">$10K</span>
<span class="t" id="t100" style="font-size:22.75px;top:607.00px;color:#70707b;left:564.30px;transform:scaleX(1.0300);transform-origin:0 0;">$5K</span>
<span class="t" id="t101" style="font-size:22.75px;top:721.00px;color:#70707b;left:564.30px;transform:scaleX(1.0825);transform-origin:0 0;">$0</span>
<span class="t" id="t102" style="font-size:22.75px;top:834.00px;color:#70707b;left:564.30px;transform:scaleX(1.0211);transform-origin:0 0;">−$5K</span>
<span class="t" id="t103" style="font-size:22.75px;top:875.00px;color:#70707b;left:662.80px;transform:scaleX(0.9928);transform-origin:0 0;">Mar 14</span>
<span class="t" id="t104" style="font-size:22.75px;top:875.00px;color:#70707b;left:808.70px;transform:scaleX(0.9942);transform-origin:0 0;">Mar 21</span>
<span class="t" id="t105" style="font-size:22.75px;top:875.00px;color:#70707b;left:952.80px;transform:scaleX(1.0422);transform-origin:0 0;">Mar 28</span>
<span class="t" id="t106" style="font-size:22.75px;top:875.00px;color:#70707b;left:1107.30px;transform:scaleX(1.0443);transform-origin:0 0;">Apr 4</span>
<span class="t" id="t107" style="font-size:22.50px;top:950.00px;color:#70707b;left:732.00px;transform:scaleX(1.0533);transform-origin:0 0;">Current period</span>
<span class="t" id="t108" style="font-size:22.50px;top:950.00px;color:#70707b;left:956.00px;transform:scaleX(1.0330);transform-origin:0 0;">Previous period</span>
<svg style="left:0;top:0" width="2880" height="1784" viewBox="0 0 2880 1784"><rect x="1450.67" y="506" width="562.5" height="2" fill="#ececec"/><rect x="1450.67" y="618" width="562.5" height="2" fill="#ececec"/><rect x="1450.67" y="730" width="562.5" height="2" fill="#ececec"/><rect x="1450.67" y="842" width="562.5" height="2" fill="#ececec"/><path d="M1454.77 731.6V556.70a4.7 4.7 0 0 1 4.7-4.7h4.5a4.7 4.7 0 0 1 4.7 4.7V731.6z" fill="#3090fd"/><path d="M1472.77 731.6V616.70a4.7 4.7 0 0 1 4.7-4.7h4.5a4.7 4.7 0 0 1 4.7 4.7V731.6z" fill="#65adfe"/><path d="M1490.77 731.6V536.70a4.7 4.7 0 0 1 4.7-4.7h4.5a4.7 4.7 0 0 1 4.7 4.7V731.6z" fill="#1e87fd"/><path d="M1508.77 731.6V676.90a4.7 4.7 0 0 1 4.7-4.7h4.5a4.7 4.7 0 0 1 4.7 4.7V731.6z" fill="#9ac9fe"/><path d="M1526.77 731.6V576.80a4.7 4.7 0 0 1 4.7-4.7h4.5a4.7 4.7 0 0 1 4.7 4.7V731.6z" fill="#419afd"/><path d="M1544.77 731.6V636.80a4.7 4.7 0 0 1 4.7-4.7h4.5a4.7 4.7 0 0 1 4.7 4.7V731.6z" fill="#76b6fe"/><path d="M1562.77 731.6V586.80a4.7 4.7 0 0 1 4.7-4.7h4.5a4.7 4.7 0 0 1 4.7 4.7V731.6z" fill="#4a9ffd"/><path d="M1580.77 731.6V686.80a4.7 4.7 0 0 1 4.7-4.7h4.5a4.7 4.7 0 0 1 4.7 4.7V731.6z" fill="#a2cefe"/><path d="M1598.77 731.6V546.70a4.7 4.7 0 0 1 4.7-4.7h4.5a4.7 4.7 0 0 1 4.7 4.7V731.6z" fill="#278cfd"/><path d="M1616.77 731.6V632.70a4.7 4.7 0 0 1 4.7-4.7h4.5a4.7 4.7 0 0 1 4.7 4.7V731.6z" fill="#73b4fe"/><path d="M1634.77 731.6V656.70a4.7 4.7 0 0 1 4.7-4.7h4.5a4.7 4.7 0 0 1 4.7 4.7V731.6z" fill="#88bffe"/><path d="M1652.77 731.6V706.70a4.7 4.7 0 0 1 4.7-4.7h4.5a4.7 4.7 0 0 1 4.7 4.7V731.6z" fill="#b4d7fe"/><path d="M1670.77 731.6V767.40a4.7 4.7 0 0 0 4.7 4.7h4.5a4.7 4.7 0 0 0 4.7-4.7V731.6z" fill="#f69f8e"/><path d="M1688.77 731.6V686.80a4.7 4.7 0 0 1 4.7-4.7h4.5a4.7 4.7 0 0 1 4.7 4.7V731.6z" fill="#a2cefe"/><path d="M1706.77 731.6V797.20a4.7 4.7 0 0 0 4.7 4.7h4.5a4.7 4.7 0 0 0 4.7-4.7V731.6z" fill="#f2755d"/><path d="M1724.77 731.6V827.40a4.7 4.7 0 0 0 4.7 4.7h4.5a4.7 4.7 0 0 0 4.7-4.7V731.6z" fill="#ee4b2c"/><path d="M1742.77 731.6V787.30a4.7 4.7 0 0 0 4.7 4.7h4.5a4.7 4.7 0 0 0 4.7-4.7V731.6z" fill="#f3836d"/><path d="M1760.77 731.6V706.70a4.7 4.7 0 0 1 4.7-4.7h4.5a4.7 4.7 0 0 1 4.7 4.7V731.6z" fill="#b4d7fe"/><path d="M1778.77 731.6V807.50a4.7 4.7 0 0 0 4.7 4.7h4.5a4.7 4.7 0 0 0 4.7-4.7V731.6z" fill="#f1674c"/><path d="M1796.77 731.6V777.30a4.7 4.7 0 0 0 4.7 4.7h4.5a4.7 4.7 0 0 0 4.7-4.7V731.6z" fill="#f5917e"/><path d="M1814.77 731.6V757.50a4.7 4.7 0 0 0 4.7 4.7h4.5a4.7 4.7 0 0 0 4.7-4.7V731.6z" fill="#f7ac9e"/><path d="M1832.77 731.6V676.90a4.7 4.7 0 0 1 4.7-4.7h4.5a4.7 4.7 0 0 1 4.7 4.7V731.6z" fill="#9ac9fe"/><path d="M1850.77 731.6V757.50a4.7 4.7 0 0 0 4.7 4.7h4.5a4.7 4.7 0 0 0 4.7-4.7V731.6z" fill="#f7ac9e"/><path d="M1868.77 731.6V626.70a4.7 4.7 0 0 1 4.7-4.7h4.5a4.7 4.7 0 0 1 4.7 4.7V731.6z" fill="#6db1fe"/><path d="M1886.77 731.6V586.70a4.7 4.7 0 0 1 4.7-4.7h4.5a4.7 4.7 0 0 1 4.7 4.7V731.6z" fill="#4a9ffd"/><path d="M1904.77 731.6V646.70a4.7 4.7 0 0 1 4.7-4.7h4.5a4.7 4.7 0 0 1 4.7 4.7V731.6z" fill="#7fbbfe"/><path d="M1922.77 731.6V546.70a4.7 4.7 0 0 1 4.7-4.7h4.5a4.7 4.7 0 0 1 4.7 4.7V731.6z" fill="#278cfd"/><path d="M1940.77 731.6V600.70a4.7 4.7 0 0 1 4.7-4.7h4.5a4.7 4.7 0 0 1 4.7 4.7V731.6z" fill="#56a5fe"/><path d="M1958.77 731.6V546.70a4.7 4.7 0 0 1 4.7-4.7h4.5a4.7 4.7 0 0 1 4.7 4.7V731.6z" fill="#278cfd"/><path d="M1976.77 731.6V556.70a4.7 4.7 0 0 1 4.7-4.7h4.5a4.7 4.7 0 0 1 4.7 4.7V731.6z" fill="#3090fd"/><path d="M1461.3 588.6C1462.6 585.7 1466.3 575.9 1469.0 571.4C1471.7 566.9 1474.9 562.0 1477.3 561.4C1479.7 560.8 1481.2 563.2 1483.2 567.9C1485.2 572.5 1487.0 581.6 1489.2 589.3C1491.4 597.0 1493.7 607.5 1496.3 614.3C1498.9 621.0 1501.3 625.1 1504.7 629.8C1508.1 634.5 1513.2 641.0 1516.6 642.4C1520.0 643.8 1522.1 639.8 1524.9 638.1C1527.7 636.4 1530.2 631.9 1533.2 632.1C1536.2 632.3 1539.2 636.5 1542.8 639.3C1546.4 642.1 1550.7 647.0 1554.7 648.8C1558.7 650.6 1563.2 648.2 1566.6 650.0C1570.0 651.8 1572.1 654.7 1574.9 659.5C1577.7 664.3 1580.6 671.5 1583.2 678.6C1585.8 685.8 1588.2 694.5 1590.4 702.4C1592.6 710.3 1594.3 718.3 1596.3 726.2C1598.3 734.1 1600.1 742.9 1602.3 750.0C1604.5 757.1 1606.6 763.8 1609.4 769.0C1612.2 774.2 1615.8 776.6 1619.0 781.0C1622.2 785.4 1625.5 790.2 1628.5 795.2C1631.5 800.2 1634.2 807.2 1636.8 810.7C1639.4 814.2 1641.2 816.2 1644.0 816.2C1646.8 816.2 1650.1 814.4 1653.5 810.7C1656.9 807.0 1660.8 800.1 1664.2 794.0C1667.6 787.9 1670.7 778.9 1673.7 773.8C1676.7 768.6 1678.8 766.1 1682.0 763.1C1685.2 760.1 1689.6 760.2 1692.8 756.0C1696.0 751.8 1698.3 745.1 1701.1 738.1C1703.9 731.1 1706.2 721.8 1709.4 714.3C1712.6 706.8 1716.3 698.3 1720.1 692.9C1723.8 687.5 1728.8 683.1 1731.9 682.1C1735.0 681.1 1736.3 684.4 1738.9 686.9C1741.5 689.4 1744.7 696.5 1747.3 697.1C1749.9 697.7 1752.0 695.2 1754.4 690.5C1756.8 685.8 1759.0 676.0 1761.6 669.0C1764.2 662.0 1767.1 654.8 1769.9 648.8C1772.7 642.8 1775.6 636.8 1778.2 633.3C1780.8 629.8 1783.2 627.7 1785.4 628.1C1787.6 628.5 1789.3 631.7 1791.3 635.7C1793.3 639.8 1795.3 647.8 1797.3 652.4C1799.3 657.0 1801.2 663.1 1803.2 663.1C1805.2 663.1 1807.0 659.0 1809.2 652.4C1811.4 645.8 1814.1 630.8 1816.3 623.8C1818.5 616.8 1820.1 611.5 1822.3 610.7C1824.5 609.9 1827.2 614.8 1829.4 619.0C1831.6 623.2 1833.2 631.7 1835.4 635.7C1837.6 639.7 1839.5 642.9 1842.5 642.9C1845.5 642.9 1849.6 637.9 1853.2 635.7C1856.8 633.5 1860.4 632.0 1864.0 629.8C1867.6 627.6 1871.1 626.2 1874.7 622.6C1878.3 619.0 1882.4 611.8 1885.4 608.3C1888.4 604.8 1890.1 601.7 1892.5 601.9C1894.9 602.1 1897.3 605.0 1899.7 609.5C1902.1 614.0 1904.4 624.0 1906.8 628.6C1909.2 633.2 1911.2 636.7 1914.0 636.9C1916.8 637.1 1920.1 633.2 1923.5 629.8C1926.9 626.4 1930.4 620.3 1934.2 616.7C1938.0 613.1 1942.5 607.9 1946.1 608.3C1949.7 608.7 1952.4 614.8 1955.6 619.0C1958.8 623.2 1961.9 632.6 1965.1 633.8C1968.3 635.0 1971.5 630.1 1974.7 626.2C1977.9 622.4 1982.6 613.3 1984.2 610.7" fill="none" stroke="#a0c8fd" stroke-width="2.8" stroke-dasharray="10.6 8.2" stroke-linecap="round"/><rect x="1446.67" y="958" width="24.3" height="4" rx="2" fill="#1f87fd"/><rect x="1474.67" y="958" width="24.3" height="4" rx="2" fill="#ee4b2c"/><rect x="1699.07" y="958" width="24.3" height="4" rx="2" fill="#9cc6fc"/></svg>
<span class="t" id="t109" style="font-size:22.75px;top:494.00px;color:#70707b;left:1342.97px;transform:scaleX(0.9842);transform-origin:0 0;">$10K</span>
<span class="t" id="t110" style="font-size:22.75px;top:607.00px;color:#70707b;left:1342.97px;transform:scaleX(1.0300);transform-origin:0 0;">$5K</span>
<span class="t" id="t111" style="font-size:22.75px;top:721.00px;color:#70707b;left:1342.97px;transform:scaleX(1.0825);transform-origin:0 0;">$0</span>
<span class="t" id="t112" style="font-size:22.75px;top:834.00px;color:#70707b;left:1342.97px;transform:scaleX(1.0211);transform-origin:0 0;">−$5K</span>
<span class="t" id="t113" style="font-size:22.75px;top:875.00px;color:#70707b;left:1441.47px;transform:scaleX(0.9928);transform-origin:0 0;">Mar 14</span>
<span class="t" id="t114" style="font-size:22.75px;top:875.00px;color:#70707b;left:1587.37px;transform:scaleX(0.9942);transform-origin:0 0;">Mar 21</span>
<span class="t" id="t115" style="font-size:22.75px;top:875.00px;color:#70707b;left:1731.47px;transform:scaleX(1.0422);transform-origin:0 0;">Mar 28</span>
<span class="t" id="t116" style="font-size:22.75px;top:875.00px;color:#70707b;left:1885.97px;transform:scaleX(1.0443);transform-origin:0 0;">Apr 4</span>
<span class="t" id="t117" style="font-size:22.50px;top:950.00px;color:#70707b;left:1510.67px;transform:scaleX(1.0533);transform-origin:0 0;">Current period</span>
<span class="t" id="t118" style="font-size:22.50px;top:950.00px;color:#70707b;left:1734.67px;transform:scaleX(1.0330);transform-origin:0 0;">Previous period</span>
<div class="abs" style="left:560px;top:1192px;width:522px;height:108px;border-radius:0 6px 6px 0;background:linear-gradient(90deg,#669dd3,#7ab3e3)"></div>
<div class="abs" style="left:560px;top:1304px;width:416px;height:108px;border-radius:0 6px 6px 0;background:#abc9e6"></div>
<div class="abs" style="left:560px;top:1484px;width:402px;height:108px;border-radius:0 6px 6px 0;background:linear-gradient(90deg,#8f7bd4,#a997e3)"></div>
<div class="abs" style="left:560px;top:1596px;width:350px;height:108px;border-radius:0 6px 6px 0;background:#cabff1"></div>
<span class="t" id="t119" style="font-size:22.50px;top:1162.00px;color:#70707b;left:560.00px;transform:scaleX(1.0198);transform-origin:0 0;">AOV with Candy Rack</span>
<span class="t" id="t120" style="font-size:22.50px;top:1454.00px;color:#70707b;left:560.00px;transform:scaleX(1.0281);transform-origin:0 0;">AOV without Candy Rack</span>
<span class="t" id="t121" style="font-size:22.75px;top:1235.00px;color:#70707b;left:1106.00px;transform:scaleX(1.0614);transform-origin:0 0;">$25</span>
<span class="t" id="t122" style="font-size:22.75px;top:1347.00px;color:#70707b;left:1000.00px;transform:scaleX(1.0008);transform-origin:0 0;">$19</span>
<span class="t" id="t123" style="font-size:22.75px;top:1527.00px;color:#70707b;left:986.00px;transform:scaleX(0.9771);transform-origin:0 0;">$17</span>
<span class="t" id="t124" style="font-size:22.75px;top:1639.00px;color:#70707b;left:934.00px;transform:scaleX(1.0245);transform-origin:0 0;">$14</span>
<span class="t" id="t125" style="font-size:22.75px;top:1235.00px;color:#077c5d;font-weight:700;left:1192.00px;transform:scaleX(1.0363);transform-origin:0 0;">30%</span>
<svg style="left:1168.60px;top:1238.70px" width="14.6" height="14.6" viewBox="0 0 14.6 14.6"><path d="M2.3 1.55H13.05V12.3M13.05 1.55L1.55 13.05" fill="none" stroke="#077c5d" stroke-width="3.1" stroke-linecap="round" stroke-linejoin="round"/></svg>
<span class="t" id="t126" style="font-size:22.75px;top:1527.00px;color:#077c5d;font-weight:700;left:1068.30px;transform:scaleX(0.9924);transform-origin:0 0;">22%</span>
<svg style="left:1044.30px;top:1530.70px" width="14.6" height="14.6" viewBox="0 0 14.6 14.6"><path d="M2.3 1.55H13.05V12.3M13.05 1.55L1.55 13.05" fill="none" stroke="#077c5d" stroke-width="3.1" stroke-linecap="round" stroke-linejoin="round"/></svg>
<svg style="left:40px;top:40px" width="40" height="40" viewBox="0 0 20 20" fill="#4a4a4a"><path d="M8.69 3.69a1.85 1.85 0 0 1 2.62 0l4.04 4.04a2.2 2.2 0 0 1 .65 1.56v5.02a1.65 1.65 0 0 1-1.65 1.65h-2.2a1.1 1.1 0 0 1-1.1-1.1v-2.95h-2.1v2.95a1.1 1.1 0 0 1-1.1 1.1h-2.2a1.65 1.65 0 0 1-1.65-1.65v-5.02a2.2 2.2 0 0 1 .65-1.56z"/></svg>
<svg style="left:40px;top:96px" width="40" height="40" viewBox="0 0 20 20" fill="#4a4a4a"><path fill-rule="evenodd" d="M6.45 3.4h7.1a2.1 2.1 0 0 1 2.07 1.75l.86 5.2q.02.15.02.3v3.1a2.75 2.75 0 0 1-2.75 2.75h-7.5a2.75 2.75 0 0 1-2.75-2.75v-3.1q0-.15.02-.3l.86-5.2a2.1 2.1 0 0 1 2.07-1.75zM6.55 5a.65.65 0 0 0-.64.54l-.76 4.5h2.3a1 1 0 0 1 .9.55l.3.6a.5.5 0 0 0 .45.28h1.8a.5.5 0 0 0 .45-.28l.3-.6a1 1 0 0 1 .9-.55h2.3l-.76-4.5a.65.65 0 0 0-.64-.54z"/></svg>
<svg style="left:40px;top:152px" width="40" height="40" viewBox="0 0 20 20" fill="#4a4a4a"><g transform="translate(10.03 9.97) scale(.9) translate(-9.75 -10.25)"><path fill-rule="evenodd" d="M10.408 3a2.75 2.75 0 0 0-1.944.805l-5.159 5.16a2.75 2.75 0 0 0 0 3.889l3.84 3.841a2.75 2.75 0 0 0 3.89 0l5.16-5.159a2.75 2.75 0 0 0 .805-1.944v-3.842a2.75 2.75 0 0 0-2.75-2.75h-3.842Zm2.592 5.2a1.2 1.2 0 1 0 0-2.4 1.2 1.2 0 0 0 0 2.4Z"/></g></svg>
<svg style="left:40px;top:208px" width="40" height="40" viewBox="0 0 20 20" fill="#4a4a4a"><circle cx="10" cy="6.45" r="3.45"/><path d="M5 16.95a1.1 1.1 0 0 1-1-1.6c1.2-2.6 3.3-4.35 6-4.35s4.8 1.75 6 4.35a1.1 1.1 0 0 1-1 1.6z"/></svg>
<svg style="left:40px;top:264px" width="40" height="40" viewBox="0 0 20 20" fill="#4a4a4a"><rect x="3.5" y="3.43" width="13" height="9.7" rx="2.7"/><rect x="5" y="4.93" width="10" height="6.7" rx="1.2" fill="#ebebeb"/><path d="M4.4 9.95L6.2 7.9Q7.1 6.9 8 7.8L10.6 10.4Q11 10.75 11.4 10.4L12.5 9.3Q13.3 8.6 14.1 9.2L15.6 10.35V12.4H4.4z"/><circle cx="12" cy="7" r="1"/><path d="M4.75 15.8h5.5M12.75 15.8h2.5" stroke="#4a4a4a" stroke-width="1.5" stroke-linecap="round" fill="none"/></svg>
<svg style="left:40px;top:320px" width="40" height="40" viewBox="0 0 20 20" fill="#4a4a4a"><path fill-rule="evenodd" d="M9.3 3.3a1.5 1.5 0 0 1 1.4 0l5.2 2.75a1.2 1.2 0 0 1 .6 1.05v.9a.9.9 0 0 1-.9.9h-11.2a.9.9 0 0 1-.9-.9v-.9a1.2 1.2 0 0 1 .6-1.05zM10 4.65l-5 2.65v.2h10v-.2z"/><rect x="4.85" y="8.5" width="1.35" height="4"/><rect x="7.9" y="8.5" width="1.35" height="4"/><rect x="10.95" y="8.5" width="1.35" height="4"/><rect x="13.9" y="8.5" width="1.35" height="4"/><path fill-rule="evenodd" d="M4.4 12.1h11.2a.9.9 0 0 1 .9.9v2.1a.9.9 0 0 1-.9.9h-11.2a.9.9 0 0 1-.9-.9v-2.1a.9.9 0 0 1 .9-.9zM5.05 13.5v1h9.95v-1z"/></svg>
<svg style="left:40px;top:376px" width="40" height="40" viewBox="0 0 20 20" fill="#4a4a4a"><rect x="4" y="9.5" width="3" height="6.45" rx="1.5"/><rect x="8.5" y="4" width="3" height="11.95" rx="1.5"/><rect x="13" y="6.5" width="3" height="9.45" rx="1.5"/></svg>
<svg style="left:40px;top:432px" width="40" height="40" viewBox="0 0 20 20" fill="#4a4a4a"><path d="M16.05 10.35A6.05 6.05 0 1 0 10.2 16.05" fill="none" stroke="#4a4a4a" stroke-width="1.9" stroke-linecap="round"/><path d="M12.1 10.15A2.1 2.1 0 1 0 10.05 12.1" fill="none" stroke="#4a4a4a" stroke-width="1.9" stroke-linecap="round"/><path d="M11.2 11.2L17.6 13.45L15.1 15.1L13.45 17.6Z" stroke="#4a4a4a" stroke-width=".7" stroke-linejoin="round"/><path d="M15.2 15.2L16.65 16.65" stroke="#4a4a4a" stroke-width="1.5" stroke-linecap="round" fill="none"/></svg>
<svg style="left:40px;top:488px" width="40" height="40" viewBox="0 0 20 20" fill="#4a4a4a"><circle cx="10" cy="10" r="6.3"/><circle cx="15.75" cy="10.00" r="1.95"/><circle cx="14.07" cy="14.07" r="1.95"/><circle cx="10.00" cy="15.75" r="1.95"/><circle cx="5.93" cy="14.07" r="1.95"/><circle cx="4.25" cy="10.00" r="1.95"/><circle cx="5.93" cy="5.93" r="1.95"/><circle cx="10.00" cy="4.25" r="1.95"/><circle cx="14.07" cy="5.93" r="1.95"/><path d="M8.05 12.45L12.3 7.85" stroke="#ebebeb" stroke-width="1.35" stroke-linecap="round" fill="none"/><circle cx="8" cy="8.25" r="1.03" fill="#ebebeb"/><circle cx="12.02" cy="12.3" r="1.03" fill="#ebebeb"/></svg>
<svg style="left:420px;top:600px" width="20" height="24" viewBox="0 0 20 24"><path d="M4.6 3.6L12.6 12L4.6 20.4" fill="none" stroke="#8a8a8a" stroke-width="3" stroke-linecap="round" stroke-linejoin="miter"/></svg>
<svg style="left:420px;top:816px" width="20" height="24" viewBox="0 0 20 24"><path d="M4.6 3.6L12.6 12L4.6 20.4" fill="none" stroke="#8a8a8a" stroke-width="3" stroke-linecap="round" stroke-linejoin="miter"/></svg>
<svg style="left:44px;top:652px" width="32" height="32" viewBox="0 0 32 32"><rect width="32" height="32" rx="8.5" fill="#4a4a4a"/><g fill="none" stroke="#ebebeb" stroke-width="2.3" stroke-linejoin="round" stroke-linecap="round"><path d="M7.6 4.6H24.4L27.2 10.6C27.2 14 22.6 15.6 19.9 12.4C18 15.6 14 15.6 12.1 12.4C9.4 15.6 4.8 14 4.8 10.6Z"/><path d="M12.6 5L12.1 12M19.4 5L19.9 12"/><path d="M7 15V26.2Q7 27.4 8.2 27.4H12.6Q13.6 27.4 13.6 26.4V20H18.4V26.4Q18.4 27.4 19.4 27.4H23.8Q25 27.4 25 26.2V15"/></g></svg>
<svg style="left:44px;top:708px" width="32" height="32" viewBox="0 0 32 32"><rect width="32" height="32" rx="8.5" fill="#4a4a4a"/><path d="M8.6 8.2L12.6 4.6L18.9 3.8L22.1 7.4L20.9 28L5.8 24.5Z" fill="#ebebeb"/><path d="M24.5 8.6L26.5 26H22.9Z" fill="#ebebeb"/><circle cx="14.1" cy="7.3" r="1.15" fill="#4a4a4a"/><path d="M17.3 11.6C14.6 10.2 11.6 11.6 11.9 14C12.3 16.6 16 16.4 15.8 19.2C15.6 21.2 12.4 21.4 10.4 19.8" fill="none" stroke="#4a4a4a" stroke-width="3.1" stroke-linecap="butt"/></svg>
<svg style="left:0;top:0" width="480" height="1000" viewBox="0 0 480 1000" fill="#4a4a4a"><circle cx="50.9" cy="892.9" r="3.4"/><circle cx="60" cy="892.9" r="3.4"/><circle cx="69.1" cy="892.9" r="3.4"/><circle cx="60" cy="883.8" r="3.4"/><circle cx="69.1" cy="883.8" r="3.4"/><circle cx="69.1" cy="874.9" r="3.4"/><path d="M59.6 912V935.3Q59.6 941.3 65.6 941.3H79.3M73.2 934.4L80.2 941.3L73.2 948.3" fill="none" stroke="#b5b5b5" stroke-width="2.5" stroke-linejoin="miter"/></svg>
<svg style="left:0;top:0" width="600" height="80" viewBox="0 0 600 80" fill="#141204"><circle cx="515.1" cy="53.1" r="3.35"/><circle cx="524.1" cy="53.1" r="3.35"/><circle cx="533.2" cy="53.1" r="3.35"/><circle cx="524.1" cy="43.9" r="3.35"/><circle cx="533.2" cy="43.9" r="3.35"/><circle cx="533.2" cy="34.7" r="3.35"/></svg>
<svg style="left:544px;top:248px" width="40" height="40" viewBox="0 0 20 20" fill="none" stroke="#4a4a4a" stroke-width="1.5"><rect x="4.35" y="4.55" width="11.35" height="10.9" rx="2.6"/><path d="M4.35 8.7H15.7"/><path d="M7 3.35V4.5M13 3.35V4.5" stroke-linecap="round"/></svg>
<svg style="left:1350px;top:256px" width="30" height="24" viewBox="0 0 30 24"><path d="M5.6 9.6L14.5 18.6L23.4 9.6" fill="none" stroke="#4a4a4a" stroke-width="3" stroke-linecap="butt" stroke-linejoin="miter"/></svg>
<div class="bev" style="left:528.00px;top:328px;width:746.67px;height:688px"></div>
<div class="bev" style="left:1306.67px;top:328px;width:746.67px;height:688px"></div>
<div class="bev" style="left:528.00px;top:1048px;width:746.67px;height:688px"></div>
<div class="bev" style="left:1306.67px;top:1048px;width:746.67px;height:688px"></div>
<div class="bev" style="left:2085.34px;top:1048px;width:746.67px;height:688px"></div>
</div></body></html>
